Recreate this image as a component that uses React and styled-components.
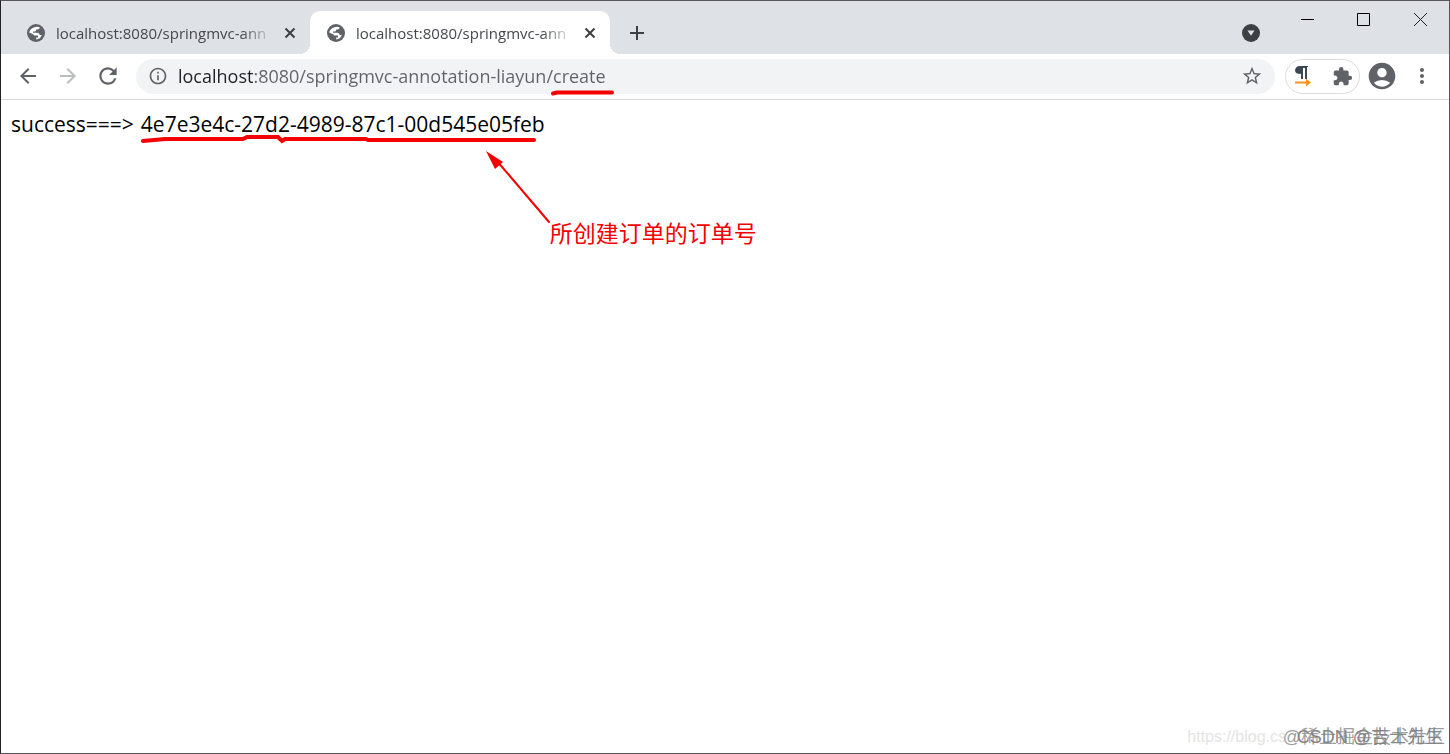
import React, { useState } from 'react';
import styled, { createGlobalStyle } from 'styled-components';
import { MdArrowBack, MdArrowForward, MdRefresh, MdInfoOutline, MdStarBorder, MdExtension, MdAccountCircle, MdMoreVert } from 'react-icons/md';

const colors = {
  strip: '#dee1e6',
  field: '#f1f3f4',
  icon: '#5f6368',
  ink: '#202124',
  red: '#f40000'
}

const GlobalStyle = createGlobalStyle`
  * {
    box-sizing: border-box;
  }
  body {
    margin: 0;
    font-family: "Open Sans", "Noto Sans CJK SC", sans-serif;
  }
`

const Window = styled.div`
  min-height: 100vh;
  display: flex;
  flex-direction: column;
  position: relative;
  background: #fff;
  border: 1px solid #55555a;
  border-left-color: #222226;
`

const TabStrip = styled.header`
  display: flex;
  align-items: flex-end;
  height: 53px;
  padding-left: 9px;
  background: ${colors.strip};
`

const Tab = styled.div`
  position: relative;
  display: flex;
  align-items: center;
  width: 300px;
  height: 43px;
  padding: 0 10px 0 16px;
  border-radius: 10px 10px 0 0;
  background: ${props => props.$active ? '#fff' : 'transparent'};
  ${props => props.$active && `
    &::before, &::after {
      content: '';
      position: absolute;
      bottom: 0;
      width: 10px;
      height: 10px;
    }
    &::before {
      right: 100%;
      background: radial-gradient(circle at 0 0, transparent 10px, #fff 10px);
    }
    &::after {
      left: 100%;
      background: radial-gradient(circle at 100% 0, transparent 10px, #fff 10px);
    }
  `}
`

const TabTitle = styled.span`
  flex: 1;
  margin: 0 6px 0 10px;
  font-size: 15px;
  line-height: 24px;
  color: #45484c;
  white-space: nowrap;
  overflow: hidden;
  mask-image: linear-gradient(90deg, #000 calc(100% - 32px), transparent);
`

const IconButton = styled.button`
  display: flex;
  align-items: center;
  justify-content: center;
  flex: none;
  width: ${props => props.$width || 40}px;
  height: ${props => props.$height || 34}px;
  padding: 0;
  border: 0;
  background: none;
  color: ${props => props.$color || colors.icon};
`

const WindowControls = styled.div`
  display: flex;
  align-self: flex-start;
  margin-left: auto;
`

const TabSearch = styled.div`
  align-self: center;
  padding-top: 12px;
`

const Toolbar = styled.nav`
  display: flex;
  align-items: center;
  height: 46px;
  padding: 0 7px 1px;
  border-bottom: 1px solid #dadce0;
`

const AddressBar = styled.form`
  position: relative;
  flex: 1;
  display: flex;
  align-items: center;
  height: 35px;
  margin: 0 10px 0 8px;
  padding: 0 3px 0 12px;
  border-radius: 18px;
  background: ${colors.field};
  color: ${colors.icon};
`

const Address = styled.input`
  flex: 1;
  min-width: 0;
  height: 30px;
  margin-left: 10px;
  padding: 0;
  border: 0;
  outline: 0;
  font-family: inherit;
  font-size: 18px;
  color: ${colors.icon};
  background: linear-gradient(90deg, ${colors.ink} 76px, ${colors.icon} 76px);
  background-clip: text;
  -webkit-text-fill-color: transparent;
`

const PathMark = styled.svg`
  position: absolute;
  left: 414px;
  top: 30px;
`

const Extensions = styled.div`
  display: flex;
  align-items: center;
  width: 75px;
  height: 35px;
  margin-right: 2px;
  border: 1px solid #dadce0;
  border-radius: 18px;
`

const Page = styled.main`
  flex: 1;
  display: flex;
  align-items: flex-start;
  gap: 7px;
  padding: 8px 10px;
  font-size: 21px;
  line-height: 32px;
  color: #000;
`

const OrderId = styled.div`
  position: relative;
`

const OrderMark = styled.svg`
  position: absolute;
  left: 0;
  top: 24px;
`

const Note = styled.span`
  position: absolute;
  left: 409px;
  top: 108px;
  color: ${colors.red};
  font-family: "Noto Sans CJK SC", sans-serif;
  font-size: 23px;
  white-space: nowrap;
`

const Watermark = styled.span`
  position: absolute;
  right: ${props => props.$right}px;
  bottom: 2px;
  font-family: "Liberation Sans", "Noto Sans CJK SC", sans-serif;
  font-size: ${props => props.$size}px;
  line-height: 28px;
  color: ${props => props.$color};
  white-space: nowrap;
`

const Globe = () => (
  <svg width="20" height="20" viewBox="0 0 20 20">
    <circle cx="10" cy="10" r="9" fill={colors.icon} />
    <path d="M9 3.200c2-.6 4.200 0 5 .8 0 1.600-.8 2.600-2.400 2.600h-1.400c0 1.200-.6 1.800-1.800 1.800H7.200v1.400h4.200c1.600 0 2.400 1 2.400 2.200h2.800c-.8 3-3.400 5-6.200 5.100v-1.900c-1.600 0-2.300-.8-2.300-2.300L3 9.200C3.400 6 6 3.800 9 3.200z" fill={colors.icon} />
    <path d="M8.500 4.200c2-.9 4-.6 5.200.1-.2 1.500-1 2.200-2.500 2.200h-1c0 1.400-.6 2-2 2H7v1.300h4.300c1.500 0 2.300.9 2.300 2.300h2.200c-.8 2.600-3 4.300-5.600 4.500v-2H12v-2H9.500c-1.400 0-2-.5-2.300-1.300L3.200 9.400c.3-2.400 2.600-4.600 5.300-5.200z" fill="#fff" />
  </svg>
)

const Cross = () => (
  <svg width="12" height="12" viewBox="0 0 12 12" stroke="#3c4043" strokeWidth="2">
    <path d="M1.5 1.5l9 9M10.5 1.5l-9 9" />
  </svg>
)

const BrowserTab = ({ title, active, onSelect }) => (
  <Tab $active={active} onClick={onSelect}>
    <Globe />
    <TabTitle>{title}</TabTitle>
    <IconButton $width={20} $height={20} aria-label="Close tab"><Cross /></IconButton>
  </Tab>
)

const App = () => {
  const [activeTab, setActiveTab] = useState(1)
  const [url, setUrl] = useState('localhost:8080/springmvc-annotation-liayun/create')

  return (
    <Window>
      <GlobalStyle />
      <TabStrip>
        {[0, 1].map(i => (
          <BrowserTab key={i} title="localhost:8080/springmvc-ann" active={activeTab === i} onSelect={() => setActiveTab(i)} />
        ))}
        <IconButton $width={54} $height={43} aria-label="New tab">
          <svg width="16" height="16" viewBox="0 0 16 16" stroke="#3c4043" strokeWidth="2">
            <path d="M8 1v14M1 8h14" />
          </svg>
        </IconButton>
        <WindowControls>
          <TabSearch>
            <IconButton $width={56} $height={40} aria-label="Search tabs">
              <svg width="18" height="18" viewBox="0 0 18 18">
                <circle cx="9" cy="9" r="9" fill="#3c4043" />
                <path d="M5.5 6.5h7L9 11.8z" fill={colors.strip} />
              </svg>
            </IconButton>
          </TabSearch>
          <IconButton $width={56} $height={37} aria-label="Minimize">
            <svg width="13" height="13" viewBox="0 0 13 13"><path d="M0 6.5h13" stroke="#000" /></svg>
          </IconButton>
          <IconButton $width={56} $height={37} aria-label="Maximize">
            <svg width="13" height="13" viewBox="0 0 13 13"><path d="M.5.5h12v12H.5z" fill="none" stroke="#000" /></svg>
          </IconButton>
          <IconButton $width={58} $height={37} aria-label="Close window">
            <svg width="13" height="13" viewBox="0 0 13 13"><path d="M0 0l13 13M13 0L0 13" stroke="#222" /></svg>
          </IconButton>
        </WindowControls>
      </TabStrip>
      <Toolbar>
        <IconButton aria-label="Back"><MdArrowBack size={24} /></IconButton>
        <IconButton aria-label="Forward" $color="#babcbe"><MdArrowForward size={24} /></IconButton>
        <IconButton aria-label="Reload"><MdRefresh size={26} /></IconButton>
        <AddressBar onSubmit={event => event.preventDefault()}>
          <MdInfoOutline size={20} />
          <Address aria-label="Address" value={url} onChange={event => setUrl(event.target.value)} />
          <PathMark width="66" height="8" viewBox="0 0 66 8">
            <path d="M3 4.5l4-1h55" fill="none" stroke={colors.red} strokeWidth="4" strokeLinecap="round" />
          </PathMark>
          <IconButton type="button" aria-label="Bookmark"><MdStarBorder size={22} /></IconButton>
        </AddressBar>
        <Extensions>
          <IconButton $width={34} aria-label="Paragraph tool">
            <svg width="18" height="22" viewBox="0 0 18 22">
              <path d="M13 2v12h-2V3H9v11H7V9C3 9 1 8 1 5.500S3 1 6 1h8v1z" fill="#3c4854" />
              <path d="M1 17.500h12" stroke="#f7931e" strokeWidth="2" />
              <path d="M12 13.500l5 4-5 4z" fill="#f7931e" />
            </svg>
          </IconButton>
          <IconButton $width={44} aria-label="Extensions"><MdExtension size={21} /></IconButton>
        </Extensions>
        <IconButton aria-label="Profile"><MdAccountCircle size={32} /></IconButton>
        <IconButton aria-label="Menu"><MdMoreVert size={24} /></IconButton>
      </Toolbar>
      <Page>
        <div>success===&gt;</div>
        <OrderId>
          4e7e3e4c-27d2-4989-87c1-00d545e05feb
          <OrderMark width="420" height="92" viewBox="0 0 420 92">
            <g fill="none" stroke={colors.red} strokeLinecap="round">
              <path d="M2 9l22-2h78l4-2h31l4 4 3-2h81l2 1h166" strokeWidth="4" />
              <path d="M356 29l52 61" strokeWidth="2" />
            </g>
            <path d="M345 19l17 11-8 7z" fill={colors.red} />
          </OrderMark>
          <Note>所创建订单的订单号</Note>
        </OrderId>
      </Page>
      <Watermark $right={163} $size={16} $color="#e4e4e4">https://blog.cs</Watermark>
      <Watermark $right={4} $size={18} $color="#a0a0a0">@稀土掘金技术社区</Watermark>
      <Watermark $right={6} $size={18} $color="#858585">CSDN @吉士先生</Watermark>
    </Window>
  )
}

export default App
